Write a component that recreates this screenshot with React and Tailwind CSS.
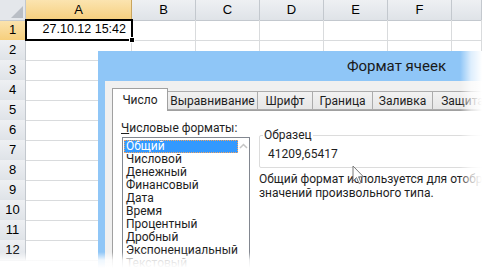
import React from "react";

const COLS = ["A", "B", "C", "D", "E", "F", ""];
const ROWS = [1, 2, 3, 4, 5, 6, 7, 8, 9, 10, 11, 12];
const FORMATS = [
  "Общий",
  "Числовой",
  "Денежный",
  "Финансовый",
  "Дата",
  "Время",
  "Процентный",
  "Дробный",
  "Экспоненциальный",
  "Текстовый",
];
const TABS = ["Выравнивание", "Шрифт", "Граница", "Заливка", "Защита"];

const gridCols = "grid grid-cols-[26px_106px_64px_64px_64px_64px_64px_30px]";

const Sheet = () => {
  return (
    <div className="flex flex-col font-['Liberation_Sans',sans-serif] text-[13px] text-black">
      {/* Column headers */}
      <div className={`${gridCols} h-[20px]`}>
        <div className="relative bg-[#e4e7eb] border-r border-b border-[#c3c8ce]">
          <div className="absolute right-[2px] bottom-[2px] w-0 h-0 border-l-[12px] border-l-transparent border-b-[12px] border-b-[#b9bec5]" />
        </div>
        {COLS.map((c, i) => (
          <div
            key={i}
            className={
              i === 0
                ? "flex items-center justify-center bg-gradient-to-b from-[#fbe4b0] to-[#f6cf7c] border-r border-b border-[#c9a55e]"
                : "flex items-center justify-center bg-gradient-to-b from-[#eef0f3] to-[#dfe3e8] border-r border-b border-[#c3c8ce]"
            }
          >
            {c}
          </div>
        ))}
      </div>
      {ROWS.map((r) => (
        <div key={r} className={`${gridCols} h-[20px]`}>
          <div
            className={
              r === 1
                ? "flex items-center justify-center bg-gradient-to-b from-[#fbe4b0] to-[#f6cf7c] border-r border-b border-[#c9a55e]"
                : "flex items-center justify-center bg-gradient-to-b from-[#eef0f3] to-[#dfe3e8] border-r border-b border-[#c3c8ce]"
            }
          >
            {r}
          </div>
          {COLS.map((c, i) => (
            <div key={i} className="flex items-center justify-end pr-[5px] border-r border-b border-[#d9dbdd] text-[12.5px]">
              {r === 1 && i === 0 ? "27.10.12 15:42" : ""}
            </div>
          ))}
        </div>
      ))}
    </div>
  );
};

const Dialog = () => {
  return (
    <div className="absolute left-[98px] top-[51px] w-[420px] h-[240px] bg-[#8fc6f7] pl-[7px] flex flex-col font-['Roboto',sans-serif] text-[12px] text-[#1e1e1e]">
      {/* Title bar */}
      <div className="h-[30px] flex items-center justify-end pr-[72px] text-[15px] text-[#1a1a1a]">
        Формат ячеек
      </div>
      {/* Body */}
      <div className="flex-1 bg-[#f0f0f0] pl-[7px] pt-[7px] flex flex-col">
        {/* Tabs */}
        <div className="flex items-end h-[22px]">
          <div className="w-[56px] h-[23px] bg-white border border-b-0 border-[#a0a0a0] flex items-center justify-center relative z-10 -mb-px">
            Число
          </div>
          {TABS.map((t) => (
            <div
              key={t}
              className={
                t === "Выравнивание"
                  ? "w-[90px] h-[19px] bg-gradient-to-b from-[#f2f2f2] to-[#e6e6e6] border border-l-0 border-[#acacac] flex items-center justify-center"
                  : t === "Шрифт"
                  ? "w-[55px] h-[19px] bg-gradient-to-b from-[#f2f2f2] to-[#e6e6e6] border border-l-0 border-[#acacac] flex items-center justify-center"
                  : "w-[60px] h-[19px] bg-gradient-to-b from-[#f2f2f2] to-[#e6e6e6] border border-l-0 border-[#acacac] flex items-center justify-center"
              }
            >
              {t}
            </div>
          ))}
        </div>
        {/* Panel */}
        <div className="flex-1 bg-white border border-[#a0a0a0] flex pl-[7px] pt-[9px] gap-[9px]">
          <div className="flex flex-col w-[130px]">
            <div className="leading-[16px] pl-[1px]">
              <span className="underline">Ч</span>исловые форматы:
            </div>
            <div className="mt-[1px] ml-[2px] w-[128px] h-[140px] border border-[#828790] flex">
              <div className="flex-1 flex flex-col pt-[2px] pl-[1px]">
                {FORMATS.map((f, i) => (
                  <div
                    key={f}
                    className={
                      i === 0
                        ? "h-[13px] leading-[13px] bg-[#3399ff] text-white pl-[2px] outline-1 outline-dotted outline-[#f4a460] -outline-offset-1"
                        : "h-[13px] leading-[13px] pl-[2px]"
                    }
                  >
                    {f}
                  </div>
                ))}
              </div>
              <div className="w-[15px] flex justify-center pt-[5px]">
                <svg width="9" height="6" viewBox="0 0 9 6">
                  <path d="M1 5 L4.5 1.5 L8 5" fill="none" stroke="#c5c5c5" strokeWidth="1.5" />
                </svg>
              </div>
            </div>
          </div>
          <div className="flex-1 flex flex-col pt-[15px]">
            <div className="relative h-[33px] border border-[#dcdcdc] rounded-[2px] mr-[-10px]">
              <div className="absolute -top-[9px] left-[3px] bg-white px-[1px] leading-[16px]">Образец</div>
              <div className="pt-[10px] pl-[8px] leading-[16px]">41209,65417</div>
            </div>
            <div className="mt-[4px] leading-[14px] whitespace-nowrap">
              Общий формат используется для отображения всех
              <br />
              значений произвольного типа.
            </div>
          </div>
        </div>
      </div>
    </div>
  );
};

const Cursor = () => (
  <svg className="absolute left-[352px] top-[165px]" width="14" height="22" viewBox="0 0 14 22">
    <path
      d="M1 1 L1 16 L4.5 12.5 L7 18.5 L9 17.6 L6.6 11.8 L11.5 11.8 Z"
      fill="white"
      stroke="#7a7a7a"
      strokeWidth="1"
      strokeLinejoin="round"
    />
  </svg>
);

export default function App() {
  return (
    <div className="relative w-[482px] h-[268px] overflow-hidden bg-white">
      <Sheet />
      {/* Selected cell A1 */}
      <div className="absolute left-[25px] top-[19px] w-[108px] h-[22px] border-2 border-black" />
      <div className="absolute left-[129px] top-[37px] w-[6px] h-[6px] bg-black border border-white" />
      <Dialog />
      <Cursor />
      {/* Right fade over the dialog */}
      <div className="absolute left-[460px] top-[51px] w-[22px] h-[217px] bg-gradient-to-r from-white/0 via-white/70 to-white" />
      {/* Bottom fade */}
      <div className="absolute left-0 top-[252px] w-[482px] h-[16px] bg-gradient-to-b from-white/0 via-white/85 to-white" />
    </div>
  );
}
